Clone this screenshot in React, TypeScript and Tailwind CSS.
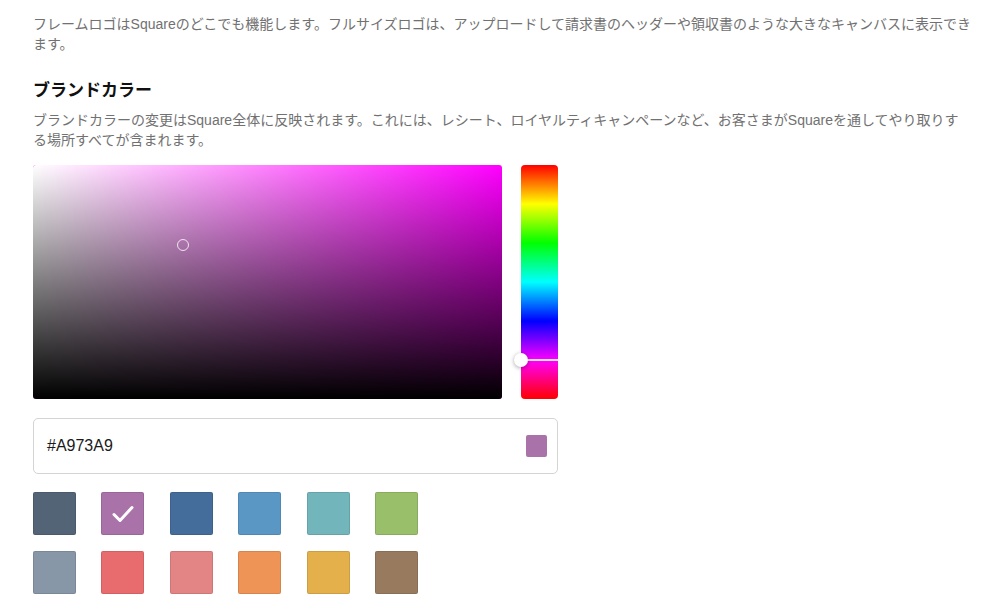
const TEXT_FONT = '[font-family:"Liberation_Sans","Noto_Sans_CJK_JP",sans-serif]'

const swatchRows: string[][] = [
  ['#546477', '#A973A9', '#446D9B', '#5B97C5', '#72B6BB', '#9ABF6A'],
  ['#8897A8', '#E86B6E', '#E38585', '#EE9457', '#E3B04C', '#987B5F'],
]

const SELECTED = '#A973A9'

function SaturationBox() {
  return (
    <div className="relative w-[469px] h-[234px] rounded-[3px] overflow-hidden bg-[#ff00ff]">
      <div className="absolute inset-0 bg-gradient-to-r from-white to-transparent" />
      <div className="absolute inset-0 bg-gradient-to-b from-transparent to-black" />
      <div className="absolute left-[144px] top-[74px] w-[12px] h-[12px] rounded-full border border-white/80" />
    </div>
  )
}

function HueBar() {
  return (
    <div className="relative w-[37px] h-[234px]">
      <div className="absolute inset-0 rounded-[4px] bg-[linear-gradient(to_bottom,#ff0000_0%,#ffff00_16.67%,#00ff00_33.33%,#00ffff_50%,#0000ff_66.67%,#ff00ff_83.33%,#ff0000_100%)]" />
      <div className="absolute left-0 right-0 top-[194px] h-[2px] bg-white/90" />
      <div className="absolute -left-[7px] top-[188px] w-[14px] h-[14px] rounded-full bg-white shadow-[0_1px_4px_rgba(0,0,0,0.35)]" />
    </div>
  )
}

export default function App() {
  return (
    <div className={`min-h-screen bg-white ${TEXT_FONT}`}>
      <div className="pl-[33px] pt-[14px] w-[967px]">
        <p className="w-[950px] text-[14px] leading-[20px] text-[#717171]">
          フレームロゴはSquareのどこでも機能します。フルサイズロゴは、アップロードして請求書のヘッダーや領収書のような大きなキャンバスに表示できます。
        </p>

        <h2 className="mt-[25px] text-[17px] leading-[24px] font-bold text-[#111]">ブランドカラー</h2>
        <p className="mt-[7px] text-[14px] leading-[20px] text-[#717171]">
          ブランドカラーの変更はSquare全体に反映されます。これには、レシート、ロイヤルティキャンペーンなど、お客さまがSquareを通してやり取りする場所すべてが含まれます。
        </p>

        <div className="mt-[15px] flex gap-[19px]">
          <SaturationBox />
          <HueBar />
        </div>

        <div className="mt-[19px] w-[525px] h-[56px] rounded-[5px] border border-[#d4d4d4] flex items-center justify-between pl-[13px] pr-[10px]">
          <span className="text-[16px] text-[#1a1a1a]">#A973A9</span>
          <span className="w-[21px] h-[22px] rounded-[2px] bg-[#A973A9]" />
        </div>

        <div className="mt-[18px] flex flex-col gap-[16px]">
          {swatchRows.map((row, i) => (
            <div key={i} className="flex gap-[25.4px]">
              {row.map((c) => (
                <div
                  key={c}
                  className="w-[43px] h-[43px] rounded-[2px] border border-black/10 flex items-center justify-center"
                  style={{ backgroundColor: c }}
                >
                  {c === SELECTED && (
                    <svg width="22" height="18" viewBox="0 0 22 18" fill="none" aria-hidden="true">
                      <path d="M2 9.5l6 6L20 2.5" stroke="white" strokeWidth="3" strokeLinecap="round" strokeLinejoin="round" />
                    </svg>
                  )}
                </div>
              ))}
            </div>
          ))}
        </div>
      </div>
    </div>
  )
}
